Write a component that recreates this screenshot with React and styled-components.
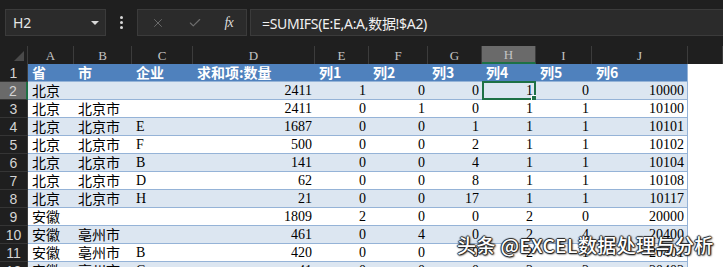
import React from "react";
import styled, { createGlobalStyle } from "styled-components";
import { X, Check } from "lucide-react";

const GlobalStyle = createGlobalStyle`
  html, body {
    margin: 0;
    padding: 0;
    background: #ffffff;
  }
  body {
    width: 723px;
    height: 267px;
    overflow: hidden;
  }
`;

const COLS = [28, 46, 58, 61, 122, 54, 59, 54, 54, 56, 96];
const LETTERS = ["A", "B", "C", "D", "E", "F", "G", "H", "I", "J"];

const HEAD = ["省", "市", "企业", "求和项:数量", "列1", "列2", "列3", "列4", "列5", "列6"];

const rows = [
  ["北京", "", "", 2411, 1, 0, 0, 1, 0, 10000],
  ["北京", "北京市", "", 2411, 0, 1, 0, 1, 1, 10100],
  ["北京", "北京市", "E", 1687, 0, 0, 1, 1, 1, 10101],
  ["北京", "北京市", "F", 500, 0, 0, 2, 1, 1, 10102],
  ["北京", "北京市", "B", 141, 0, 0, 4, 1, 1, 10104],
  ["北京", "北京市", "D", 62, 0, 0, 8, 1, 1, 10108],
  ["北京", "北京市", "H", 21, 0, 0, 17, 1, 1, 10117],
  ["安徽", "", "", 1809, 2, 0, 0, 2, 0, 20000],
  ["安徽", "亳州市", "", 461, 0, 4, 0, 2, 4, 20400],
  ["安徽", "亳州市", "B", 420, 0, 0, 0, 2, 1, 20401],
  ["安徽", "亳州市", "C", 41, 0, 0, 0, 2, 2, 20402],
];

const Page = styled.div`
  position: relative;
  width: 723px;
  height: 267px;
  overflow: hidden;
  background: #ffffff;
`;

const FormulaBar = styled.div`
  height: 46px;
  box-sizing: border-box;
  padding: 9px 0 0 5px;
  background: #1f1f1f;
  display: flex;
  align-items: flex-start;
`;

const NameBox = styled.div`
  width: 101px;
  height: 27px;
  box-sizing: border-box;
  background: #2b2b2b;
  border: 1px solid #3b3b3b;
  display: flex;
  align-items: center;
  justify-content: space-between;
  padding: 0 6px 0 7px;
  color: #e6e6e6;
  font: 14px "Noto Sans", "Liberation Sans", sans-serif;
`;

const Caret = styled.span`
  width: 0;
  height: 0;
  border-left: 4px solid transparent;
  border-right: 4px solid transparent;
  border-top: 4px solid #d8d8d8;
`;

const Kebab = styled.div`
  width: 31px;
  height: 27px;
  display: flex;
  flex-direction: column;
  align-items: center;
  justify-content: center;
  gap: 2px;

  span {
    width: 3px;
    height: 3px;
    border-radius: 50%;
    background: #d8d8d8;
  }
`;

const ButtonGroup = styled.div`
  width: 110px;
  height: 27px;
  box-sizing: border-box;
  background: #2b2b2b;
  border: 1px solid #3b3b3b;
  display: flex;
  align-items: center;
  justify-content: space-around;
  padding: 0 2px;
  color: #6e6e6e;
`;

const Fx = styled.span`
  font: italic 14px "Liberation Serif", serif;
  color: #dcdcdc;
  letter-spacing: -1px;
`;

const FormulaInput = styled.div`
  flex: 1;
  margin-left: 3px;
  height: 27px;
  box-sizing: border-box;
  background: #2b2b2b;
  border: 1px solid #3b3b3b;
  border-right: none;
  display: flex;
  align-items: center;
  padding-left: 11px;
  color: #f0f0f0;
  font: 14px "Noto Sans", "Noto Sans CJK SC", sans-serif;
  letter-spacing: -0.3px;
`;

const Sheet = styled.div`
  display: grid;
  grid-template-columns: ${COLS.map((c) => c + "px").join(" ")} 1fr;
  grid-auto-rows: 18px;
`;

const ColHead = styled.div`
  box-sizing: border-box;
  background: ${(p) => (p.$active ? "#6a6a6a" : "#1f1f1f")};
  border-right: 1px solid #3c3c3c;
  border-bottom: ${(p) => (p.$active ? "2px solid #1e7145" : "none")};
  color: #c4c4c4;
  font: 13px "Liberation Serif", serif;
  display: flex;
  align-items: center;
  justify-content: center;
  padding-top: 2px;
`;

const Corner = styled(ColHead)`
  position: relative;

  &::after {
    content: "";
    position: absolute;
    right: 3px;
    bottom: 3px;
    border-left: 10px solid transparent;
    border-bottom: 10px solid #4a4a4a;
  }
`;

const RowHead = styled.div`
  box-sizing: border-box;
  background: ${(p) => (p.$active ? "#6a6a6a" : "#1f1f1f")};
  border-right: ${(p) => (p.$active ? "2px solid #1e7145" : "1px solid #3c3c3c")};
  border-bottom: 1px solid #353535;
  color: #d4d4d4;
  font: 14px "Liberation Sans", sans-serif;
  display: flex;
  align-items: center;
  justify-content: center;
`;

const Cell = styled.div`
  position: relative;
  box-sizing: border-box;
  background: ${(p) => (p.$head ? "#4f81bd" : p.$even ? "#dce6f1" : "#ffffff")};
  border-bottom: 1px solid #95b3d7;
  border-right: ${(p) => (p.$last ? "1px solid #95b3d7" : "none")};
  color: ${(p) => (p.$head ? "#ffffff" : "#000000")};
  font-weight: ${(p) => (p.$head ? 700 : 400)};
  font-family: ${(p) =>
    p.$latin
      ? '"Liberation Serif", serif'
      : '"Noto Sans CJK SC", sans-serif'};
  font-size: 14px;
  line-height: 17px;
  white-space: nowrap;
  display: flex;
  align-items: center;
  justify-content: ${(p) => (p.$right ? "flex-end" : "flex-start")};
  padding: 0 3px 0 4px;
`;

const Blank = styled.div`
  background: #ffffff;
`;

const Selection = styled.div`
  position: absolute;
  left: 0;
  top: -1px;
  right: 0;
  bottom: -1px;
  border: 2px solid #1e7145;

  &::after {
    content: "";
    position: absolute;
    right: -4px;
    bottom: -4px;
    width: 5px;
    height: 5px;
    background: #1e7145;
    border: 1px solid #ffffff;
  }
`;

const Watermark = styled.div`
  position: absolute;
  left: 457px;
  top: 231px;
  font: 500 19px "Noto Sans CJK SC", sans-serif;
  letter-spacing: 0.4px;
  color: #ffffff;
  white-space: nowrap;
  text-shadow: 1px 0 1px #222, -1px 0 1px #222, 0 1px 1px #222, 0 -1px 1px #222,
    1px 1px 2px #111;
`;

export default function App() {
  return (
    <Page>
      <GlobalStyle />
      <FormulaBar>
        <NameBox>
          H2
          <Caret />
        </NameBox>
        <Kebab>
          <span />
          <span />
          <span />
        </Kebab>
        <ButtonGroup>
          <X size={14} strokeWidth={1.6} />
          <Check size={14} strokeWidth={2} />
          <Fx>fx</Fx>
        </ButtonGroup>
        <FormulaInput>=SUMIFS(E:E,A:A,数据!$A2)</FormulaInput>
      </FormulaBar>

      <Sheet>
        <Corner />
        {LETTERS.map((l) => (
          <ColHead key={l} $active={l === "H"}>
            {l}
          </ColHead>
        ))}
        <ColHead />

        <RowHead>1</RowHead>
        {HEAD.map((h, i) => (
          <Cell key={h} $head $last={i === 9}>
            {h}
          </Cell>
        ))}
        <Blank />

        {rows.map((r, ri) => {
          const even = ri % 2 === 0;
          return (
            <React.Fragment key={ri}>
              <RowHead $active={ri === 0}>{ri + 2}</RowHead>
              {r.map((v, ci) => {
                const num = typeof v === "number";
                return (
                  <Cell
                    key={ci}
                    $even={even}
                    $latin={num || ci === 2}
                    $right={num}
                    $last={ci === 9}
                  >
                    {v}
                    {ri === 0 && ci === 7 && <Selection />}
                  </Cell>
                );
              })}
              <Blank />
            </React.Fragment>
          );
        })}
      </Sheet>

      <Watermark>头条 @EXCEL数据处理与分析</Watermark>
    </Page>
  );
}
